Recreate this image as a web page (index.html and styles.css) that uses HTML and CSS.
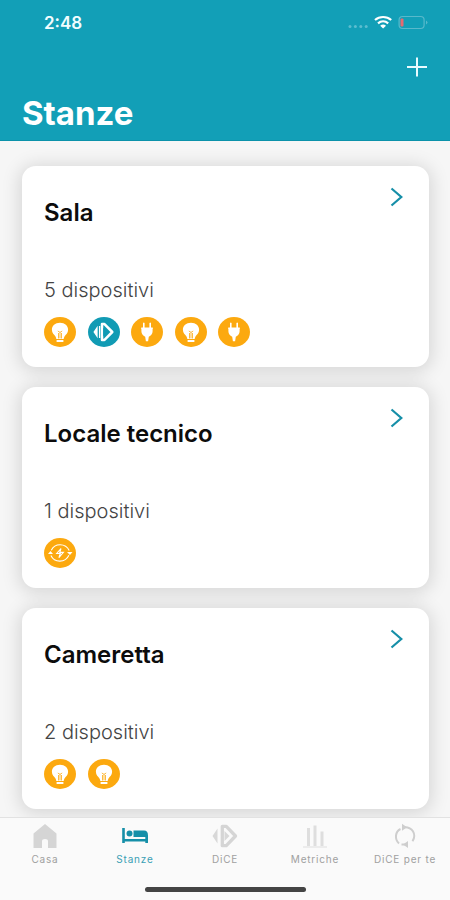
FILE: index.html
```html
<!DOCTYPE html>
<html lang="it">
<head>
<meta charset="utf-8">
<title>Stanze</title>
<link rel="stylesheet" href="styles.css">
</head>
<body>
<svg class="defs" aria-hidden="true">
  <symbol id="bulb" viewBox="0 0 32 30">
    <ellipse cx="16" cy="15" rx="16" ry="15" fill="#fca90f"/>
    <path d="M16 5.7c-4.9 0-8.1 3.1-8.1 7 0 3.300 2.300 4.800 3.600 6.700.6 1 .8 1.800.8 2.700h7.400c0-.9.2-1.700.8-2.700 1.300-1.900 3.600-3.400 3.600-6.700 0-3.900-3.200-7-8.100-7zM12.600 23h6.800v1.900h-6.800z" fill="#fff"/>
    <path d="M13.800 14l2.200 1.400 2.200-1.400M16 15.400v6M14.500 16v5.500M17.500 16v5.500" fill="none" stroke="#fca90f" stroke-width=".8"/>
  </symbol>
  <symbol id="plug" viewBox="0 0 32 30">
    <ellipse cx="16" cy="15" rx="16" ry="15" fill="#fca90f"/>
    <path d="M12 6q.8-.8 1.600 0v4.500h4.800V6q.8-.8 1.600 0v4.500h1.600q.8.800 0 1.600v2.200c0 2.500-1.500 4.500-3.800 5.500l-.7 4.500h-2.200l-.7-4.500c-2.300-1-3.800-3-3.800-5.500v-2.200q-.8-.8 0-1.600H12z" fill="#fff"/>
  </symbol>
  <symbol id="dice" viewBox="0 0 32 30">
    <ellipse cx="16" cy="15" rx="16" ry="15" fill="#119bb4"/>
    <path d="M14 7.100h2.500L24.300 15l-7.800 7.900H14z" fill="none" stroke="#fff" stroke-width="2.500" stroke-linejoin="round"/>
    <path d="M15.200 10.700v8.600l5-4.300z" fill="#119bb4"/>
    <path d="M11.600 9v12M9 10.800L6.200 15 9 19.200z" fill="#fff" stroke="#fff" stroke-width="1.300"/>
  </symbol>
  <symbol id="energy" viewBox="0 0 32 30">
    <ellipse cx="16" cy="15" rx="16" ry="15" fill="#fca90f"/>
    <g fill="none" stroke="#fff" stroke-width="1.100"><path d="M7.300 12.200C10.700 4.900 21.600 4.700 25.200 12.500M6.900 17.500c3.500 7.500 14.400 7.600 18-.2"/><path d="M17 10.500l-4.300 5h3.600l-1.400 4.200 4.500-5.300h-3.600z"/></g>
    <path d="M23 14h5.500L26 17zM4 16h5l-2.500-3z" fill="#fff"/>
  </symbol>
  <symbol id="chevron" viewBox="0 0 14 20"><path d="M1.500 1.500L11.300 10 1.500 18.500" fill="none" stroke="#168fa8" stroke-width="2.200"/></symbol>
</svg>
<div class="screen">
  <header class="header">
    <div class="status">
      <span class="time">2:48</span>
      <svg class="signals" width="80" height="16" viewBox="0 0 80 16">
        <g fill="#5cbdcf"><circle cx="2" cy="11.500" r="1.500"/><circle cx="7.400" cy="11.500" r="1.500"/><circle cx="12.800" cy="11.500" r="1.500"/><circle cx="18.200" cy="11.500" r="1.500"/></g>
        <g fill="none" stroke="#fff" stroke-width="2.200"><path d="M27 5c4.600-4 11.600-4 16.200 0"/><path d="M30 8.300c3-2.600 7.200-2.600 10.200 0"/></g>
        <path d="M32.200 10.700q2.900-2.200 5.800 0L35.100 13.500z" fill="#fff"/>
        <rect x="51.100" y="1.500" width="25" height="12" rx="3.500" fill="none" stroke="#58b9cb" stroke-width="1.200"/>
        <rect x="52.500" y="3.500" width="3" height="8" rx="1" fill="#e66a70"/>
        <path d="M78 5.500q3 2 0 4z" fill="#58b9cb"/>
      </svg>
    </div>
    <div class="actions">
      <svg width="20" height="20" viewBox="0 0 20 20"><path d="M0 10h20M10 .5v19" stroke="#e9fbff" stroke-width="2"/></svg>
    </div>
    <h1 class="title">Stanze</h1>
  </header>
  <main class="rooms">
    <section class="card">
      <svg class="chevron"><use href="#chevron"/></svg>
      <h2 class="name sala">Sala</h2>
      <p class="count">5 dispositivi</p>
      <div class="devices">
        <svg><use href="#bulb"/></svg><svg><use href="#dice"/></svg><svg><use href="#plug"/></svg><svg><use href="#bulb"/></svg><svg><use href="#plug"/></svg>
      </div>
    </section>
    <section class="card">
      <svg class="chevron"><use href="#chevron"/></svg>
      <h2 class="name">Locale tecnico</h2>
      <p class="count">1 dispositivi</p>
      <div class="devices"><svg><use href="#energy"/></svg></div>
    </section>
    <section class="card">
      <svg class="chevron"><use href="#chevron"/></svg>
      <h2 class="name">Cameretta</h2>
      <p class="count">2 dispositivi</p>
      <div class="devices"><svg><use href="#bulb"/></svg><svg><use href="#bulb"/></svg></div>
    </section>
  </main>
  <nav class="tabs">
    <a class="tab">
      <svg viewBox="0 0 30 26"><path d="M3.500 10.500L15 1l11.500 9.500V25H18v-7q0-2-3-2t-3 2v7H3.500z" fill="#d5d5d5"/></svg>
      <span>Casa</span>
    </a>
    <a class="tab active">
      <svg viewBox="0 0 30 26"><path d="M2.200 5h2.600v11h20.500v-3.500H28V20h-2.700v-1.400H4.800V20H2.200z" fill="#168fa8"/><circle cx="9.500" cy="10.500" r="3" fill="#168fa8"/><path d="M13.500 7.500H24q4 0 4 5v1.500H13.500z" fill="#168fa8"/></svg>
      <span>Stanze</span>
    </a>
    <a class="tab">
      <svg viewBox="0 0 30 26"><path d="M12.300 3.300h4L25.500 13l-9.200 9.700h-4z" fill="none" stroke="#d5d5d5" stroke-width="3.300" stroke-linejoin="round"/><path d="M14.500 8v10l5-5zM7.500 5.500v15L2.500 13z" fill="#d8d8d8"/></svg>
      <span>DiCE</span>
    </a>
    <a class="tab">
      <svg viewBox="0 0 30 26"><path d="M8.500 23V5M15 23V2.500M22 23V8.500" stroke="#dedede" stroke-width="3"/><path d="M3 24h24" stroke="#dedede"/></svg>
      <span>Metriche</span>
    </a>
    <a class="tab">
      <svg viewBox="0 0 30 26"><g fill="none" stroke="#cecece" stroke-width="2"><path d="M9 20.500C4.500 16.500 5 8.500 10.500 6M14 4.200c8-.7 13 7 8.500 14M11.500 21.500l5 0"/></g><path d="M12 .8v7l5-3.500zM18 18v7l-5-3.500z" fill="#cecece"/></svg>
      <span>DiCE per te</span>
    </a>
    <div class="home-indicator"></div>
  </nav>
</div>
</body>
</html>
```
FILE: styles.css
```css
* { box-sizing: border-box; }
body { margin: 0; font-family: Inter, "Liberation Sans", sans-serif; }
.defs { position: absolute; width: 0; height: 0; }
.screen { width: 450px; height: 900px; display: flex; flex-direction: column; overflow: hidden; background: #f6f6f6; }
.header { height: 141px; flex: none; background: #129fb7; border-bottom: 1px solid #0b92aa; color: #fff; }
.status { height: 46px; padding: 0 22px 0 44px; display: flex; align-items: center; justify-content: space-between; }
.time { font-size: 17px; font-weight: 600; line-height: 46px; color: #f2fdff; }
.actions { height: 42px; padding: 11px 23px 0; display: flex; justify-content: flex-end; }
.title { margin: 5px 0 0 22px; font-size: 33px; font-weight: 700; line-height: 40px; width: max-content; }
.rooms { height: 676px; flex: none; padding: 25px 21px 0 22px; display: flex; flex-direction: column; gap: 20px; overflow: hidden; }
.card { position: relative; height: 201px; flex: none; padding: 32px 22px 0; background: #fff; border-radius: 14px; box-shadow: 0 2px 18px 3px rgba(0, 0, 0, .13); }
.chevron { position: absolute; top: 21px; right: 25px; width: 14px; height: 20px; }
.name { margin: 0; width: max-content; font-size: 24px; font-weight: 600; line-height: 30px; color: #0c0c0c; }
.count { margin: 48px 0 0; width: max-content; font-size: 20px; font-weight: 300; line-height: 28px; color: #444; }
.devices { display: flex; gap: 11.5px; margin-top: 13px; }
.devices svg { width: 32px; height: 30px; display: block; }
.tabs { position: relative; height: 83px; flex: none; padding-top: 5px; display: grid; grid-template-columns: repeat(5, 1fr); background: #fafafa; border-top: 1px solid #e2e2e2; }
.tab { display: flex; flex-direction: column; align-items: center; font-size: 10px; line-height: 14px; letter-spacing: .8px; color: #a0a0a0; white-space: nowrap; }
.tab svg { width: 30px; height: 26px; margin-bottom: 3px; }
.active { color: #3aa0b5; }
.home-indicator { position: absolute; left: 145px; bottom: 8px; width: 161px; height: 5px; border-radius: 3px; background: #444; }
```
